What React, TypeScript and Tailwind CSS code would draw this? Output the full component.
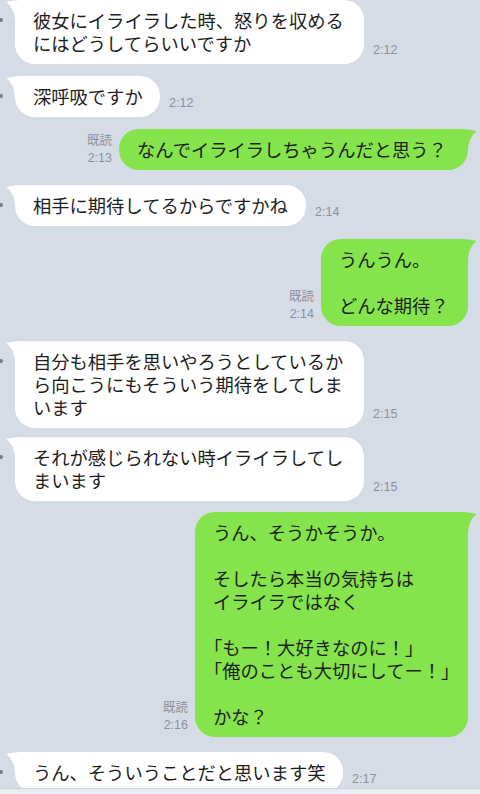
import React from "react";

const jp = { fontFamily: '"Noto Sans CJK JP", "Noto Sans", sans-serif' };
const tm = { fontFamily: '"Liberation Sans", "Noto Sans CJK JP", sans-serif' };

type Line = React.ReactNode;

function Tail({ color, right }: { color: string; right?: boolean }) {
  return (
    <svg
      width="30"
      height="24"
      viewBox="-10 0 30 24"
      className={
        right
          ? "absolute -right-[10px] top-0 -scale-x-100"
          : "absolute -left-[10px] top-0"
      }
    >
      <path d="M-8.5 2 Q4 -1 20 0 L20 22 L0 22 Q0 9 -8.5 2 Z" fill={color} />
    </svg>
  );
}

function In({
  lines,
  time,
  mt,
  w,
}: {
  lines: Line[];
  time: string;
  mt: string;
  w: string;
}) {
  return (
    <div className={`flex items-end ${mt}`}>
      <div className="self-start mt-[18px] w-[3px] h-[4px] rounded-r-full bg-[#7a7e86] mr-[12px]" />
      <div
        className={`relative shrink-0 bg-white rounded-[20px] pl-[18px] py-[9px] text-[18.3px] leading-[23px] text-[#1e1e1e] whitespace-nowrap ${w}`}
        style={jp}
      >
        <Tail color="#ffffff" />
        <div className="relative">
          {lines.map((l, i) => (
            <div key={i}>{l}</div>
          ))}
        </div>
      </div>
      <div
        className="ml-[9px] mb-[6px] text-[12.5px] leading-[15px] text-[#8b919c]"
        style={tm}
      >
        {time}
      </div>
    </div>
  );
}

function Out({
  lines,
  time,
  mt,
  w,
}: {
  lines: Line[];
  time: string;
  mt: string;
  w: string;
}) {
  return (
    <div className={`flex items-end justify-end pr-[12px] ${mt}`}>
      <div
        className="mr-[7px] mb-[3px] text-right text-[12.5px] leading-[17px] text-[#8b919c]"
        style={tm}
      >
        <div>既読</div>
        <div>{time}</div>
      </div>
      <div
        className={`relative shrink-0 bg-[#85e34b] rounded-[20px] pl-[18px] py-[9px] text-[18.3px] leading-[23px] text-[#1e1e1e] whitespace-nowrap ${w}`}
        style={jp}
      >
        <Tail color="#85e34b" right />
        <div className="relative">
          {lines.map((l, i) => (
            <div key={i}>{l === "" ? "\u00a0" : l}</div>
          ))}
        </div>
      </div>
    </div>
  );
}

export default function App() {
  return (
    <div className="w-[480px] h-[794px] bg-[#d6dce5] flex flex-col overflow-hidden">
      <div className="flex-1 overflow-hidden">
        <In
          lines={["彼女にイライラした時、怒りを収める", "にはどうしてらいいですか"]}
          time="2:12"
          mt="mt-0"
          w="w-[349px]"
        />
        <In lines={["深呼吸ですか"]} time="2:12" mt="mt-[12px]" w="w-[145px]" />
        <Out
          lines={["なんでイライラしちゃうんだと思う？"]}
          time="2:13"
          mt="mt-[12px]"
          w="w-[349px]"
        />
        <In
          lines={["相手に期待してるからですかね"]}
          time="2:14"
          mt="mt-[15px]"
          w="w-[291px]"
        />
        <Out
          lines={["うんうん。", "", "どんな期待？"]}
          time="2:14"
          mt="mt-[13px]"
          w="w-[147px]"
        />
        <In
          lines={[
            "自分も相手を思いやろうとしているか",
            "ら向こうにもそういう期待をしてしま",
            "います",
          ]}
          time="2:15"
          mt="mt-[15px]"
          w="w-[349px]"
        />
        <In
          lines={["それが感じられない時イライラしてし", "まいます"]}
          time="2:15"
          mt="mt-[9px]"
          w="w-[349px]"
        />
        <Out
          lines={[
            "うん、そうかそうか。",
            "",
            "そしたら本当の気持ちは",
            "イライラではなく",
            "",
            <>
              <span className="-ml-[9px]">「</span>もー！大好きなのに！」
            </>,
            <>
              <span className="-ml-[9px]">「</span>俺のことも大切にしてー！」
            </>,
            "",
            "かな？",
          ]}
          time="2:16"
          mt="mt-[11px]"
          w="w-[273px]"
        />
        <In
          lines={["うん、そういうことだと思います笑"]}
          time="2:17"
          mt="mt-[15px]"
          w="w-[328px]"
        />
      </div>
      <div className="h-[6px] shrink-0 bg-[#e9ecf0] border-t border-[#cfd4dc]" />
    </div>
  );
}
